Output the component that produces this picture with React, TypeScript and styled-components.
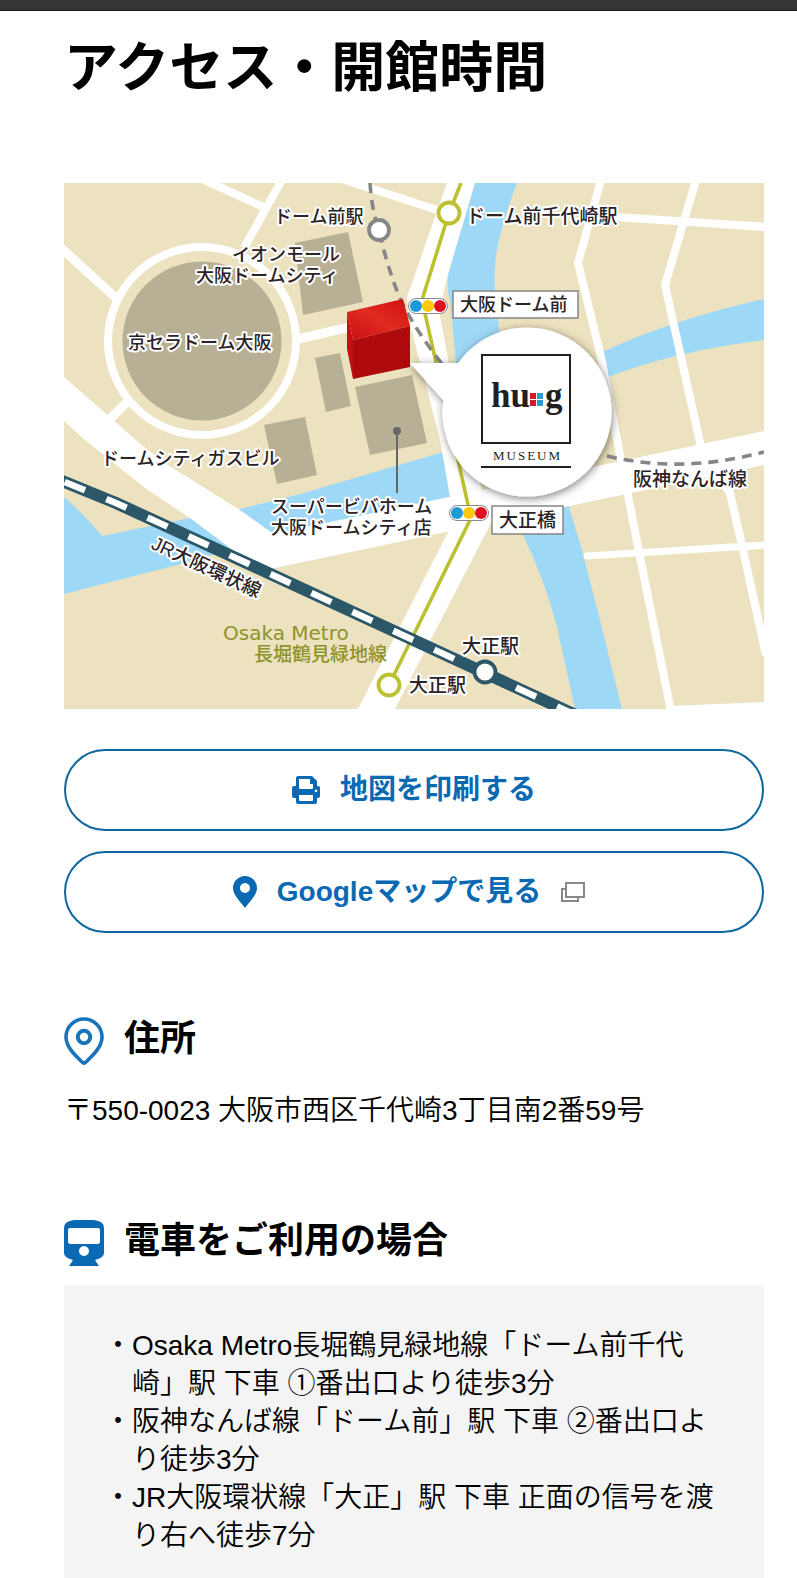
import React from "react";
import styled, { createGlobalStyle } from "styled-components";

const GlobalStyle = createGlobalStyle`
  *, *::before, *::after { box-sizing: border-box; }
  body {
    margin: 0;
    background: #fff;
    color: #000;
    font-family: "Liberation Sans", "Noto Sans CJK JP", sans-serif;
  }
`;

const BLUE = "#0a69b3";

const TopBar = styled.div`
  height: 11px;
  background: #343638;
  border-bottom: 1px solid #1b1c1f;
`;

const Page = styled.main`
  padding: 18px 33px 0 64px;
`;

const PageTitle = styled.h1`
  margin: 0 0 76px;
  font-size: 54px;
  line-height: 78px;
  font-weight: 700;
`;

const MapFigure = styled.figure`
  margin: 0 0 40px;
`;

const MapDrawing = styled.svg`
  display: block;
  width: 100%;
  height: auto;
`;

const MapLabel = styled.text<{ $size?: number; $plain?: boolean }>`
  font-family: "Liberation Sans", "Noto Sans CJK JP", sans-serif;
  font-size: ${(p) => p.$size ?? 18}px;
  font-weight: 500;
  fill: #2b2326;
  stroke: #fff;
  stroke-width: ${(p) => (p.$plain ? 0 : 4)}px;
  stroke-linejoin: round;
  paint-order: stroke;
`;

const LineName = styled.text<{ $latin?: boolean }>`
  font-family: ${(p) => (p.$latin ? '"DejaVu Sans"' : '"Liberation Sans", "Noto Sans CJK JP"')}, sans-serif;
  font-size: ${(p) => (p.$latin ? 20 : 19)}px;
  font-weight: ${(p) => (p.$latin ? 400 : 500)};
  fill: #8f932b;
`;

const LogoText = styled.text<{ $size: number; $weight: number }>`
  font-family: "Liberation Serif", serif;
  font-size: ${(p) => p.$size}px;
  font-weight: ${(p) => p.$weight};
  fill: #231f20;
`;

const Actions = styled.div`
  display: flex;
  flex-direction: column;
  gap: 20px;
  margin-bottom: 78px;
`;

const actionStyle = `
  display: flex;
  align-items: center;
  justify-content: center;
  gap: 20px;
  width: 100%;
  height: 82px;
  padding: 0 30px;
  border: 2px solid #0f679f;
  border-radius: 41px;
  background: #fff;
  color: ${BLUE};
  font-family: inherit;
  font-size: 28px;
  line-height: 40px;
  font-weight: 700;
  text-decoration: none;
  cursor: pointer;
`;

const ActionButton = styled.button`${actionStyle}`;
const ActionLink = styled.a`
  ${actionStyle}
  padding-right: 40px;
`;

const Icon = styled.svg`
  display: block;
  flex: none;
`;

const Section = styled.section`
  margin-bottom: 83px;
`;

const SectionTitle = styled.h2`
  display: flex;
  align-items: center;
  gap: 20px;
  height: 56px;
  margin: 0 0 16px;
  font-size: 36px;
  line-height: 52px;
  font-weight: 700;

  ${Icon} {
    margin-top: 4px;
  }
`;

const Address = styled.p`
  margin: 0;
  padding-top: 9px;
  font-size: 28px;
  line-height: 38px;
  font-weight: 350;
`;

const Panel = styled.div`
  padding: 42px 40px 48px;
  background: #f4f4f4;
`;

const RouteList = styled.ul`
  margin: 0;
  padding: 0 0 0 28px;
  list-style: none;
  font-size: 28px;
  line-height: 38px;
  font-weight: 350;
`;

const RouteItem = styled.li`
  text-indent: -28px;
`;

function PrinterIcon() {
  return (
    <Icon width="28" height="28" viewBox="0 0 28 28" aria-hidden="true">
      <path
        fill={BLUE}
        fillRule="evenodd"
        d="M4 2a2 2 0 0 1 2-2h14l5 5v5h1a2 2 0 0 1 2 2v8a2 2 0 0 1-2 2h-1v4a2 2 0 0 1-2 2H6a2 2 0 0 1-2-2v-4H2a2 2 0 0 1-2-2v-8a2 2 0 0 1 2-2h2zM7 3v9q0 1 1 1h12q1 0 1-1V8h-3V3zM7 19v5q0 1 1 1h12q1 0 1-1v-5zM24 13.5a1.4 1.4 0 1 0 .01 0z"
      />
    </Icon>
  );
}

function PinIcon() {
  return (
    <Icon width="24" height="32" viewBox="0 0 24 32" aria-hidden="true">
      <path
        fill={BLUE}
        fillRule="evenodd"
        d="M12 0a12 12 0 0 1 12 12c0 7-7 13-12 20C7 25 0 19 0 12A12 12 0 0 1 12 0zM12 7a5 5 0 1 0 .01 0z"
      />
    </Icon>
  );
}

function NewWindowIcon() {
  return (
    <Icon width="24" height="20" viewBox="0 0 24 20" fill="none" stroke="#888" strokeWidth="2" aria-hidden="true">
      <path d="M5 1h18v14H5z" />
      <path d="M5 7H1v12h16v-4" />
    </Icon>
  );
}

function PinOutlineIcon() {
  return (
    <Icon width="40" height="48" viewBox="0 0 40 48" fill="none" stroke="#1874b9" aria-hidden="true">
      <path strokeWidth="3.6" d="M20 2a18 18 0 0 1 18 18c0 10-9 18-16 25q-2 2-4 0C11 38 2 30 2 20A18 18 0 0 1 20 2z" />
      <circle cx="20" cy="20" r="6.2" strokeWidth="4" />
    </Icon>
  );
}

function TrainIcon() {
  return (
    <Icon width="40" height="46" viewBox="0 0 40 46" aria-hidden="true">
      <path
        fill={BLUE}
        fillRule="evenodd"
        d="M10 0h20q10 1 10 8v25q0 5-9 7l4 6H5l4-6q-9-2-9-7V8q0-7 10-8zM6 8q-2 0-2 2v11q0 3 2 3h28q2 0 2-3V10q0-2-2-2zM20 26a5 5 0 1 0 .01 0z"
      />
    </Icon>
  );
}

function Signal({ x, y }: { x: number; y: number }) {
  return (
    <g transform={`translate(${x} ${y})`}>
      <rect x="-19.5" y="-7.5" width="39" height="15" rx="7.5" fill="#fff" stroke="#8a8a8a" />
      <circle cx="-12" r="6" fill="#1c9ad8" />
      <circle r="6" fill="#fdc70c" />
      <circle cx="12" r="6" fill="#df1020" />
    </g>
  );
}

function AccessMap() {
  return (
    <MapDrawing viewBox="64 183 700 526" role="img" aria-label="周辺地図">
      <defs>
        <linearGradient id="roof" x1="0" y1="1" x2="1" y2="0">
          <stop offset="0" stopColor="#c90f12" />
          <stop offset=".5" stopColor="#e02a20" />
          <stop offset="1" stopColor="#cf1010" />
        </linearGradient>
        <filter id="bubbleShadow" x="-20%" y="-20%" width="140%" height="140%">
          <feDropShadow dx="1" dy="2" stdDeviation="4" floodColor="#000" floodOpacity=".5" />
        </filter>
      </defs>

      <rect x="64" y="183" width="700" height="526" fill="#ede2bf" />

      <g fill="#9ed8f7">
        <path d="M64 497Q82 512 102 536L190 518 240 509 300 494 443 452 454 498 270 538 230 549 193 561 64 594z" />
        <path d="M475 183H517Q505 215 499 240C492 268 494 300 499 327C515 400 545 460 567 500L582 550 600 620 622 709H575L557 627Q545 580 522 533C500 480 466 430 456 363L450 300Q446 290 449 268z" />
        <path d="M600 353Q670 320 764 299V340Q670 352 603 379z" />
      </g>

      <g fill="none" stroke="#fff" strokeWidth="8">
        <path d="M200 178L268 209M283 178L244 248M342 179L440 211" />
        <path strokeWidth="9" d="M60 247L116 298M128 401L108 421M294 340L350 327" />
        <path d="M601 180L578 263 601 357 640 557 671 711" />
        <path d="M696 180L665 285 701 447 730 493 743 550 766 655" />
        <path d="M580 214L616 217 766 227" />
        <path strokeWidth="7" strokeLinecap="round" d="M587 556L766 545" />
        <circle cx="202" cy="341" r="94" strokeWidth="8" />
      </g>
      <g fill="#fff">
        <path d="M64 377L137 441 163 462 240 510 275 535 280 566 258 571 230 548 190 518 145 488 85 440 64 421z" />
        <path d="M268 535L764 431V465L256 572z" />
        <path d="M447 183H475L447 278 439 312 449 363 482 490 490 525 395 709H358L448 532 450 497 440 440 409 320 407 297z" />
        <path d="M670 706L764 702V709H670z" />
      </g>

      <g fill="#b8b094">
        <circle cx="202" cy="341" r="79.5" />
        <path d="M295 243L348 232 363 302 303 315z" />
        <path d="M315 358L340 353 351 406 326 412z" />
        <path d="M355 387L412 375 427 443 370 455z" />
        <path d="M264 425L305 417 317 475 277 484z" />
      </g>

      <path fill="none" stroke="#bcc132" strokeWidth="3.6" d="M461 183L449 213 422 300 471 518 389 685" />
      <g fill="none" stroke="#868686" strokeWidth="3.6" strokeDasharray="10 7">
        <path d="M370 183Q372 212 379 230C386 262 397 295 406 310Q418 333 442 364" />
        <path d="M607 456Q682 474 764 452" />
      </g>

      <path fill="none" stroke="#2b5768" strokeWidth="12" d="M60 480L116 503 238 559 580 717" />
      <path
        fill="none"
        stroke="#fff"
        strokeWidth="6.5"
        strokeDasharray="22 23.1"
        strokeDashoffset="-5"
        d="M60 480L116 503 238 559 580 717"
      />

      <g fill="#fff" strokeWidth="3.8">
        <circle cx="449" cy="213" r="10.5" stroke="#bcc132" />
        <circle cx="389" cy="685" r="10.5" stroke="#bcc132" />
        <circle cx="379" cy="230" r="10" stroke="#868686" />
        <circle cx="485" cy="672" r="10.5" stroke="#2b5768" />
      </g>

      <path fill="url(#roof)" d="M347 312L403 299 410 326 353 340z" />
      <path fill="#af0a0e" d="M353 340L410 326V367L353 379z" />
      <path fill="#c41014" d="M347 312L353 340V379L347 349z" />

      <path d="M397 431V493" stroke="#666" strokeWidth="2" />
      <circle cx="397" cy="431" r="4" fill="#666" />

      <g fill="#fff" filter="url(#bubbleShadow)">
        <circle cx="527" cy="412" r="84.5" />
        <path d="M410 363H470L450 408 443 400z" />
      </g>
      <rect x="482" y="355" width="88" height="88" fill="#fff" stroke="#231f20" strokeWidth="2" />
      <LogoText x="491" y="407" $size={35} $weight={700}>hu</LogoText>
      <LogoText x="545" y="407" $size={35} $weight={700}>g</LogoText>
      <path fill="#d01c25" d="M530 393h6v6h-6zM530 400h6v6h-6z" />
      <path fill="#2a9bd3" d="M537 393h6v6h-6zM537 400h6v6h-6z" />
      <LogoText x="493" y="460" $size={13} $weight={400} letterSpacing="2">MUSEUM</LogoText>
      <path d="M481 467H571" stroke="#231f20" strokeWidth="2" />

      <Signal x={428} y={306} />
      <Signal x={469} y={513} />

      <g fill="#fff" stroke="#858585" strokeWidth="1.5">
        <rect x="453" y="291" width="125" height="27" />
        <rect x="492" y="506" width="71" height="28" />
      </g>

      <MapLabel x="460" y="311" $plain>大阪ドーム前</MapLabel>
      <MapLabel x="499" y="527" $size={19} $plain>大正橋</MapLabel>
      <MapLabel x="274" y="223">ドーム前駅</MapLabel>
      <MapLabel x="466" y="223" $size={19}>ドーム前千代崎駅</MapLabel>
      <MapLabel x="232" y="261">イオンモール</MapLabel>
      <MapLabel x="196" y="282">大阪ドームシティ</MapLabel>
      <MapLabel x="128" y="349">京セラドーム大阪</MapLabel>
      <MapLabel x="101" y="465">ドームシティガスビル</MapLabel>
      <MapLabel x="271" y="513">スーパービバホーム</MapLabel>
      <MapLabel x="271" y="534">大阪ドームシティ店</MapLabel>
      <MapLabel x="633" y="486" $size={19}>阪神なんば線</MapLabel>
      <MapLabel x="462" y="653" $size={19}>大正駅</MapLabel>
      <MapLabel x="409" y="692" $size={19}>大正駅</MapLabel>
      <MapLabel transform="translate(150 548) rotate(25)" $size={19}>JR大阪環状線</MapLabel>
      <LineName x="223" y="640" $latin>Osaka Metro</LineName>
      <LineName x="254" y="661">長堀鶴見緑地線</LineName>
    </MapDrawing>
  );
}

const routes = [
  "Osaka Metro長堀鶴見緑地線「ドーム前千代崎」駅 下車 ①番出口より徒歩3分",
  "阪神なんば線「ドーム前」駅 下車 ②番出口より徒歩3分",
  "JR大阪環状線「大正」駅 下車 正面の信号を渡り右へ徒歩7分",
];

export default function App() {
  return (
    <div lang="ja">
      <GlobalStyle />
      <TopBar />
      <Page>
        <PageTitle>アクセス・開館時間</PageTitle>
        <MapFigure>
          <AccessMap />
        </MapFigure>
        <Actions>
          <ActionButton type="button">
            <PrinterIcon />
            地図を印刷する
          </ActionButton>
          <ActionLink href="#map">
            <PinIcon />
            Googleマップで見る
            <NewWindowIcon />
          </ActionLink>
        </Actions>
        <Section>
          <SectionTitle>
            <PinOutlineIcon />
            住所
          </SectionTitle>
          <Address>〒550-0023 大阪市西区千代崎3丁目南2番59号</Address>
        </Section>
        <section>
          <SectionTitle>
            <TrainIcon />
            電車をご利用の場合
          </SectionTitle>
          <Panel>
            <RouteList>
              {routes.map((route) => (
                <RouteItem key={route}>・{route}</RouteItem>
              ))}
            </RouteList>
          </Panel>
        </section>
      </Page>
    </div>
  );
}
